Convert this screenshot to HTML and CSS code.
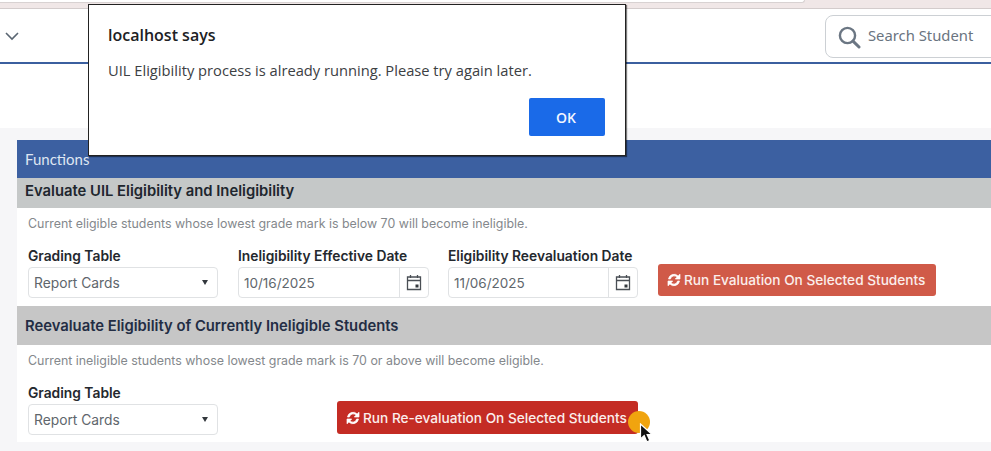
FILE: index.html
```html
<!DOCTYPE html>
<html lang="en">
<head>
    <meta charset="UTF-8">
    <meta name="viewport" content="width=device-width, initial-scale=1.0">
    <title>UIL Eligibility</title>
    <link rel="stylesheet" href="styles.css">
</head>
<body>
    <div class="browser-strip"><div class="browser-tab"></div></div>

    <header class="topbar">
        <svg class="chevron" width="16" height="10" viewBox="0 0 16 10"><path d="M2 2l6 6 6-6" fill="none" stroke="#5a6672" stroke-width="1.6"/></svg>
        <div class="search">
            <svg width="24" height="24" viewBox="0 0 24 24"><circle cx="10.500" cy="10.500" r="7.600" fill="none" stroke="#6b7683" stroke-width="2.400"/><path d="M16 16.200l6 5.800" fill="none" stroke="#6b7683" stroke-width="3" stroke-linecap="round"/></svg>
            <span>Search Student</span>
        </div>
    </header>

    <main class="page">
        <section class="panel">
            <div class="panel-title">Functions</div>

            <h2 class="section-title">Evaluate UIL Eligibility and Ineligibility</h2>
            <div class="section-body first">
                <p class="note">Current eligible students whose lowest grade mark is below 70 will become ineligible.</p>
                <div class="fields">
                    <div class="field">
                        <label>Grading Table</label>
                        <div class="select">Report Cards <i class="caret"></i></div>
                    </div>
                    <div class="field field-date">
                        <label>Ineligibility Effective Date</label>
                        <div class="date">
                            <span class="date-value">10/16/2025</span>
                            <span class="date-btn"><svg width="16" height="17" viewBox="0 0 16 17"><path d="M1.500 3h13v12.500h-13zM1.500 6.500h13M4.500 1v3M11.500 1v3" fill="none" stroke="#4a4f55" stroke-width="1.300"/><rect x="9.500" y="10.500" width="3" height="3" fill="#33383d"/></svg></span>
                        </div>
                    </div>
                    <div class="field">
                        <label>Eligibility Reevaluation Date</label>
                        <div class="date">
                            <span class="date-value">11/06/2025</span>
                            <span class="date-btn"><svg width="16" height="17" viewBox="0 0 16 17"><path d="M1.500 3h13v12.500h-13zM1.500 6.500h13M4.500 1v3M11.500 1v3" fill="none" stroke="#4a4f55" stroke-width="1.300"/><rect x="9.500" y="10.500" width="3" height="3" fill="#33383d"/></svg></span>
                        </div>
                    </div>
                    <button class="run run-light">
                        <svg width="14" height="14" viewBox="0 0 14 14"><path d="M1.500 6a5.600 5.600 0 0 1 9.600-3L13 1.200V6H8.300l1.700-1.800A3.800 3.800 0 0 0 3.400 6zM12.500 8a5.600 5.600 0 0 1-9.600 3L1 12.800V8h4.700L4 9.800A3.800 3.800 0 0 0 10.600 8z" fill="#fff" stroke="#fff" stroke-width="0.700"/></svg>
                        Run Evaluation On Selected Students
                    </button>
                </div>
            </div>

            <h2 class="section-title second">Reevaluate Eligibility of Currently Ineligible Students</h2>
            <div class="section-body">
                <p class="note">Current ineligible students whose lowest grade mark is 70 or above will become eligible.</p>
                <div class="fields fields-wide">
                    <div class="field">
                        <label>Grading Table</label>
                        <div class="select">Report Cards <i class="caret"></i></div>
                    </div>
                    <button class="run run-dark">
                        <svg width="14" height="14" viewBox="0 0 14 14"><path d="M1.500 6a5.600 5.600 0 0 1 9.600-3L13 1.200V6H8.300l1.700-1.800A3.800 3.800 0 0 0 3.400 6zM12.500 8a5.600 5.600 0 0 1-9.600 3L1 12.800V8h4.700L4 9.800A3.800 3.800 0 0 0 10.600 8z" fill="#fff" stroke="#fff" stroke-width="0.700"/></svg>
                        Run Re-evaluation On Selected Students
                    </button>
                </div>
            </div>
        </section>
    </main>

    <!-- browser alert -->
    <div class="alert">
        <h3>localhost says</h3>
        <p>UIL Eligibility process is already running. Please try again later.</p>
        <div class="alert-actions"><button class="ok">OK</button></div>
    </div>

    <!-- recording cursor -->
    <div class="click-dot"></div>
    <svg class="cursor" width="15" height="21" viewBox="0 0 15 21"><path d="M1.500 1v15l3.700-3.400 2.600 6.200 3-1.300-2.700-6h5z" fill="#111" stroke="#fff" stroke-width="1.200"/></svg>
</body>
</html>
```

FILE: styles.css
```css
* {
    box-sizing: border-box;
}
html, body {
    height: 451px;
    overflow: hidden;
}
body {
    margin: 0;
    background-color: #fff;
    font-family: "Lato", "Noto Sans", sans-serif;
    color: #2b3038;
}
.browser-strip {
    height: 9px;
    background-color: #f0e7e7;
    border-bottom: 1px solid #d3cccc;
}
.browser-tab {
    width: 805px;
    height: 3px;
    background-color: #fff;
    border-radius: 0 0 8px 0;
    border-right: 1px solid #d8d2d2;
    border-bottom: 1px solid #d8d2d2;
}
.topbar {
    height: 55px;
    padding: 6px 0 0 4px;
    display: flex;
    justify-content: space-between;
    align-items: flex-start;
    border-bottom: 2px solid #3b5f9f;
}
.chevron {
    margin-top: 16px;
}
.search {
    width: 180px;
    height: 43px;
    margin-right: -14px;
    padding: 0 0 3px 11px;
    display: flex;
    align-items: center;
    gap: 7px;
    border: 1px solid #ccd0d4;
    border-radius: 8px;
    font-family: "Noto Sans", sans-serif;
    font-size: 14.800px;
    color: #6a7480;
}
.search svg {
    margin-top: 3px;
}
.page {
    margin-top: 64px;
    padding: 12px 0 0 17px;
    height: 323px;
    background-color: #f6f6f8;
}
.panel {
    background-color: #fff;
    height: 302px;
}
.panel-title {
    height: 38px;
    padding: 10px 0 0 8px;
    background-color: #3c60a1;
    color: #dfe6f2;
    font-size: 15px;
}
.section-title {
    margin: 0;
    height: 30px;
    padding: 0 0 5px 8px;
    display: flex;
    align-items: center;
    background-color: #c5c8c8;
    font-family: "Inter", sans-serif;
    font-size: 14.800px;
    font-weight: 600;
    color: #20262e;
}
.section-title.second {
    height: 39px;
    padding-bottom: 0;
    background-color: #c6c6c6;
    font-size: 14.800px;
    color: #232d44;
}
.section-body {
    padding: 9px 0 0 11px;
}
.section-body.first {
    height: 98px;
}
.note {
    margin: 0;
    font-family: "Inter", sans-serif;
    font-size: 12.400px;
    line-height: 14px;
    color: #84888c;
    white-space: nowrap;
}
.fields {
    margin-top: 16px;
    display: flex;
    align-items: flex-start;
    gap: 20px;
}
.fields-wide {
    gap: 119px;
    margin-top: 16px;
}
.field {
    width: 190px;
}
.field-date {
    width: 191px;
    margin-right: -1px;
}
label {
    display: block;
    height: 20px;
    font-family: "Inter", sans-serif;
    font-size: 13.800px;
    font-weight: 600;
    line-height: 18px;
    white-space: nowrap;
    color: #24282e;
}
.select, .date {
    height: 31px;
    border: 1px solid #e0e2e4;
    border-radius: 4px;
    background-color: #fff;
    font-family: "Inter", sans-serif;
    font-size: 13.500px;
    color: #60666c;
}
.select {
    padding: 0 9px 0 5px;
    display: flex;
    align-items: center;
    justify-content: space-between;
    font-size: 13.800px;
}
.caret {
    width: 0;
    height: 0;
    border-left: 3.500px solid transparent;
    border-right: 3.500px solid transparent;
    border-top: 5px solid #33383d;
}
.date {
    display: flex;
    align-items: center;
}
.date-value {
    flex: 1;
    padding-left: 5px;
}
.date-btn {
    width: 29px;
    height: 100%;
    display: flex;
    align-items: center;
    justify-content: center;
    border-left: 1px solid #e0e2e4;
}
.run {
    padding: 0 9px;
    display: flex;
    align-items: center;
    gap: 3px;
    border: none;
    border-radius: 3px;
    color: #fbeeec;
    font-family: "Inter", sans-serif;
    font-size: 13.650px;
    font-weight: 500;
    white-space: nowrap;
}
.run-light {
    width: 278px;
    height: 32px;
    margin-top: 17px;
    background-color: #d05a48;
}
.run-dark {
    width: 301px;
    height: 33px;
    margin-top: 17px;
    background-color: #c42c24;
}
.alert {
    position: absolute;
    left: 88px;
    top: 4px;
    width: 538px;
    height: 152px;
    padding: 20px 20px 0 19px;
    background-color: #fff;
    border: 1px solid #222;
    box-shadow: 1px 1px 1px rgba(0,0,0,0.5);
    font-family: "Open Sans", sans-serif;
}
.alert h3 {
    margin: 0;
    font-size: 16px;
    font-weight: 600;
    line-height: 20px;
    color: #202124;
}
.alert p {
    margin: 15px 0 0;
    font-size: 14.700px;
    line-height: 20px;
    white-space: nowrap;
    color: #3c4043;
}
.alert-actions {
    margin-top: 18px;
    display: flex;
    justify-content: flex-end;
}
.ok {
    width: 76px;
    height: 38px;
    padding: 0 2px 0 0;
    border: none;
    border-radius: 2px;
    background-color: #1a6ae8;
    color: #f2f6ff;
    font-family: "Open Sans", sans-serif;
    font-size: 14px;
    font-weight: 600;
}
.click-dot {
    position: absolute;
    left: 628px;
    top: 411px;
    width: 22px;
    height: 22px;
    border-radius: 50%;
    background-color: #f0a40f;
}
.cursor {
    position: absolute;
    left: 639px;
    top: 423px;
}
```
